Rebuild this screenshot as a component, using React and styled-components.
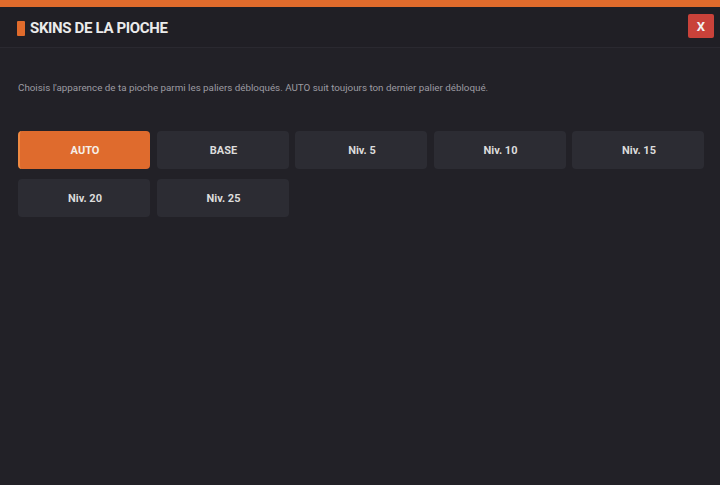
import React, { useState } from "react";
import styled, { createGlobalStyle } from "styled-components";

const GlobalStyle = createGlobalStyle`
  html, body {
    margin: 0;
    padding: 0;
    background: #222127;
  }
  * { box-sizing: border-box; }
`;

const Panel = styled.div`
  width: 720px;
  height: 485px;
  background: #222127;
  border-top: 7px solid #e06b2c;
  font-family: Roboto, "Liberation Sans", sans-serif;
  display: flex;
  flex-direction: column;
`;

const Header = styled.header`
  display: flex;
  align-items: center;
  justify-content: space-between;
  height: 41px;
  padding: 0 6px 0 17px;
  border-bottom: 1px solid #2a2930;
  background: #201f25;
`;

const Title = styled.h1`
  display: flex;
  align-items: center;
  gap: 5px;
  margin: 2px 0 0;
  color: #ebebeb;
  font-size: 15px;
  font-weight: 700;
  letter-spacing: -0.35px;

  &::before {
    content: "";
    width: 8px;
    height: 15px;
    background: #e06b2c;
    border-radius: 1px;
  }
`;

const CloseButton = styled.button`
  width: 26px;
  height: 24px;
  margin-top: -2px;
  border: none;
  border-radius: 2px;
  background: #c9423a;
  color: #f2f2f2;
  font-family: inherit;
  font-size: 13px;
  font-weight: 700;
  cursor: pointer;
  padding: 0;
`;

const Body = styled.div`
  padding: 33px 16px 0 18px;
`;

const Description = styled.p`
  margin: 0 0 36px;
  color: #9c9ba2;
  font-size: 9.8px;
  line-height: 14px;
`;

const SkinGrid = styled.div`
  display: grid;
  grid-template-columns: repeat(5, 132px);
  column-gap: 6.5px;
  row-gap: 10px;
`;

const SkinButton = styled.button`
  height: 38px;
  border: none;
  border-left: 2px solid ${p => (p.$active ? "#f08a42" : "transparent")};
  border-radius: 4px;
  background: ${p => (p.$active ? "#df6b2d" : "#2c2c33")};
  color: ${p => (p.$active ? "#f6efe9" : "#dcdcdc")};
  font-family: inherit;
  font-size: 11px;
  font-weight: 700;
  cursor: pointer;
  padding: 0;
`;

const skins = ["AUTO", "BASE", "Niv. 5", "Niv. 10", "Niv. 15", "Niv. 20", "Niv. 25"];

const App = () => {
  const [selected, setSelected] = useState("AUTO");

  return (
    <>
      <GlobalStyle />
      <Panel>
        <Header>
          <Title>SKINS DE LA PIOCHE</Title>
          <CloseButton>X</CloseButton>
        </Header>
        <Body>
          <Description>
            Choisis l'apparence de ta pioche parmi les paliers débloqués. AUTO suit toujours ton dernier palier débloqué.
          </Description>
          <SkinGrid>
            {skins.map(skin => (
              <SkinButton
                key={skin}
                $active={skin === selected}
                onClick={() => setSelected(skin)}
              >
                {skin}
              </SkinButton>
            ))}
          </SkinGrid>
        </Body>
      </Panel>
    </>
  );
};

export default App;
